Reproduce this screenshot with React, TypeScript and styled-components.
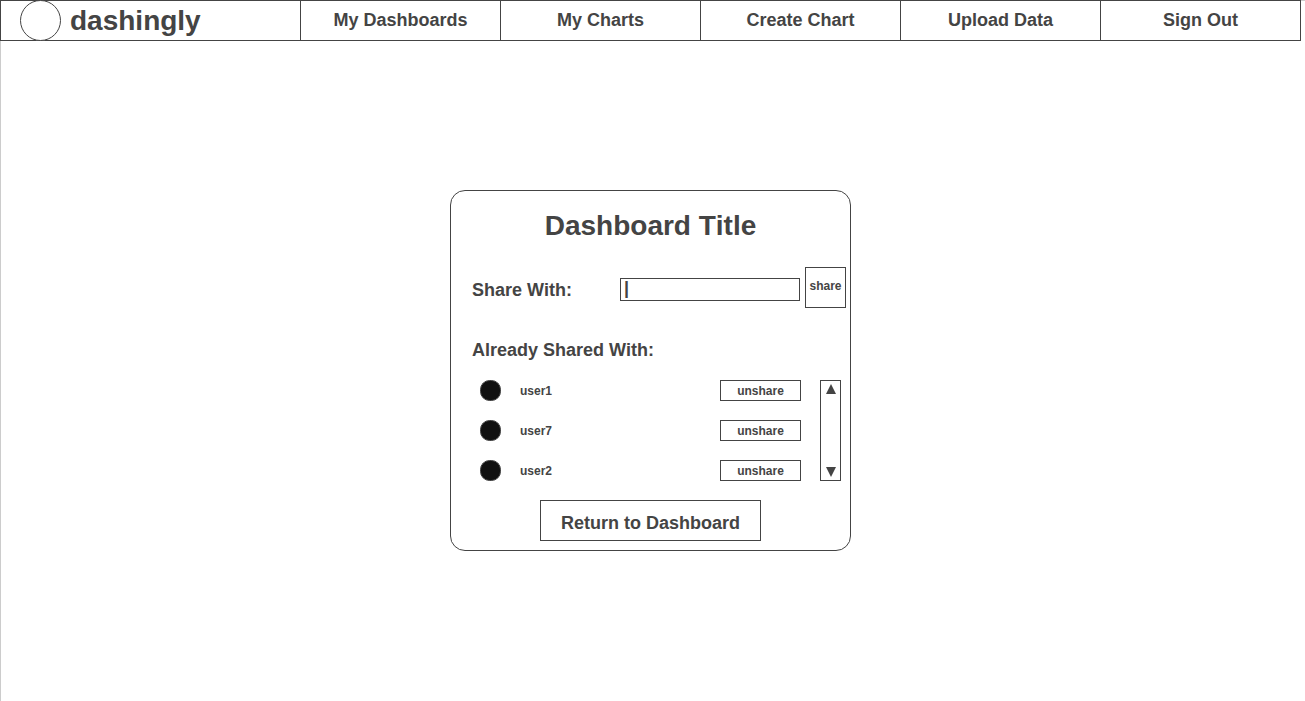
import React from 'react';
import styled, { createGlobalStyle } from 'styled-components';

const INK = '#444444';

const GlobalStyle = createGlobalStyle`
  *, *::before, *::after { box-sizing: border-box; }
  body {
    margin: 0;
    background: #ffffff;
    color: ${INK};
    font-family: "Liberation Sans", Arial, Helvetica, sans-serif;
    font-weight: 700;
    font-kerning: none;
  }
`;

const Page = styled.div`
  min-height: 100vh;
  padding-right: 4px;
  box-shadow: inset 1px 1px 0 #cccccc;
`;

const Nav = styled.nav`
  display: grid;
  grid-template-columns: 3fr repeat(5, 2fr);
  height: 41px;
  background: #ffffff;
  border: solid ${INK};
  border-width: 1px 1px 1px 0;
`;

const NavLink = styled.a`
  display: flex;
  align-items: center;
  justify-content: center;
  padding-bottom: 1px;
  border-left: 1px solid ${INK};
  color: inherit;
  font-size: 18px;
  line-height: 20px;
  text-decoration: none;
  white-space: nowrap;
`;

const Brand = styled(NavLink)`
  justify-content: flex-start;
  gap: 9px;
  padding: 0 0 0 19px;
  font-size: 28px;
  line-height: 32px;
`;

const Logo = styled.svg`
  flex: none;
  margin: -1px 0;
`;

const Main = styled.main`
  display: flex;
  justify-content: center;
  padding: 149px 0 40px;
`;

const Card = styled.section`
  display: flex;
  flex-direction: column;
  width: 100%;
  max-width: 401px;
  padding: 19px 0 9px;
  border: 1px solid ${INK};
  border-radius: 15px;
`;

const Title = styled.h1`
  margin: 0 0 25px;
  font-size: 28px;
  line-height: 32px;
  text-align: center;
`;

const ShareForm = styled.form`
  display: flex;
  gap: 5px;
  padding: 0 4px 0 21px;
`;

const Field = styled.div`
  display: flex;
  flex: 1;
  align-items: center;
  padding-top: 4px;
`;

const FieldLabel = styled.label`
  flex: 1;
  font-size: 18px;
  line-height: 20px;
`;

const TextInput = styled.input`
  width: 180px;
  height: 23px;
  padding: 0 3px 2px;
  border: 1px solid ${INK};
  border-radius: 0;
  outline: none;
  background: #ffffff;
  color: inherit;
  font: inherit;
  font-size: 18px;
  line-height: 20px;
`;

const Button = styled.button<{ $width: number; $height: number; $large?: boolean }>`
  width: ${(p) => p.$width}px;
  height: ${(p) => p.$height}px;
  padding: 0;
  border: 1px solid ${INK};
  border-radius: 0;
  background: #ffffff;
  color: inherit;
  font: inherit;
  font-size: ${(p) => (p.$large ? 18 : 12)}px;
  line-height: ${(p) => (p.$large ? 20 : 14)}px;
  white-space: nowrap;
  cursor: pointer;
`;

const ShareButton = styled(Button)`
  padding-bottom: 4px;
`;

const ReturnButton = styled(Button)`
  align-self: center;
  margin-top: 19px;
  padding-top: 4px;
`;

const Subtitle = styled.h2`
  margin: 32px 0 20px;
  padding-left: 21px;
  font-size: 18px;
  line-height: 20px;
`;

const SharedPanel = styled.div`
  display: flex;
  gap: 19px;
  padding: 0 9px 0 29px;
`;

const UserList = styled.ul`
  display: flex;
  flex: 1;
  flex-direction: column;
  gap: 19px;
  margin: 0;
  padding: 0;
  list-style: none;
`;

const UserRow = styled.li`
  display: flex;
  align-items: center;
  gap: 19px;
  height: 21px;
`;

const Avatar = styled.svg`
  flex: none;
`;

const UserName = styled.span`
  flex: 1;
  font-size: 12px;
  line-height: 14px;
`;

const Scroller = styled.div`
  display: flex;
  flex-direction: column;
  justify-content: space-between;
  width: 21px;
  height: 101px;
  padding: 3px 0;
  border: 1px solid ${INK};
`;

const ScrollButton = styled.button`
  display: flex;
  justify-content: center;
  padding: 0 0 0 1px;
  border: 0;
  background: none;
  color: inherit;
  cursor: pointer;
`;

const links = ['My Dashboards', 'My Charts', 'Create Chart', 'Upload Data', 'Sign Out'];
const users = ['user1', 'user7', 'user2'];

export default function App() {
  return (
    <>
      <GlobalStyle />
      <Page>
        <Nav>
          <Brand href="#home">
            <Logo width="41" height="41" viewBox="0 0 41 41" aria-hidden="true">
              <circle cx="20.5" cy="20.5" r="20" fill="#ffffff" stroke={INK} />
            </Logo>
            dashingly
          </Brand>
          {links.map((text) => (
            <NavLink key={text} href="#page">{text}</NavLink>
          ))}
        </Nav>
        <Main>
          <Card>
            <Title>Dashboard Title</Title>
            <ShareForm onSubmit={(e) => e.preventDefault()}>
              <Field>
                <FieldLabel htmlFor="share-with">Share With:</FieldLabel>
                <TextInput id="share-with" type="text" defaultValue="|" />
              </Field>
              <ShareButton type="submit" $width={41} $height={41}>share</ShareButton>
            </ShareForm>
            <Subtitle>Already Shared With:</Subtitle>
            <SharedPanel>
              <UserList>
                {users.map((user) => (
                  <UserRow key={user}>
                    <Avatar width="21" height="21" viewBox="0 0 21 21" aria-hidden="true">
                      <rect x="0.5" y="0.5" width="20" height="20" rx="9" fill="#111111" stroke={INK} />
                    </Avatar>
                    <UserName>{user}</UserName>
                    <Button type="button" $width={81} $height={21}>unshare</Button>
                  </UserRow>
                ))}
              </UserList>
              <Scroller>
                <ScrollButton type="button" aria-label="Scroll up">
                  <svg width="10" height="10" viewBox="0 0 10 10">
                    <path d="M5 0 L10 10 H0 Z" fill="currentColor" />
                  </svg>
                </ScrollButton>
                <ScrollButton type="button" aria-label="Scroll down">
                  <svg width="10" height="10" viewBox="0 0 10 10">
                    <path d="M0 0 H10 L5 10 Z" fill="currentColor" />
                  </svg>
                </ScrollButton>
              </Scroller>
            </SharedPanel>
            <ReturnButton type="button" $width={221} $height={41} $large>
              Return to Dashboard
            </ReturnButton>
          </Card>
        </Main>
      </Page>
    </>
  );
}
